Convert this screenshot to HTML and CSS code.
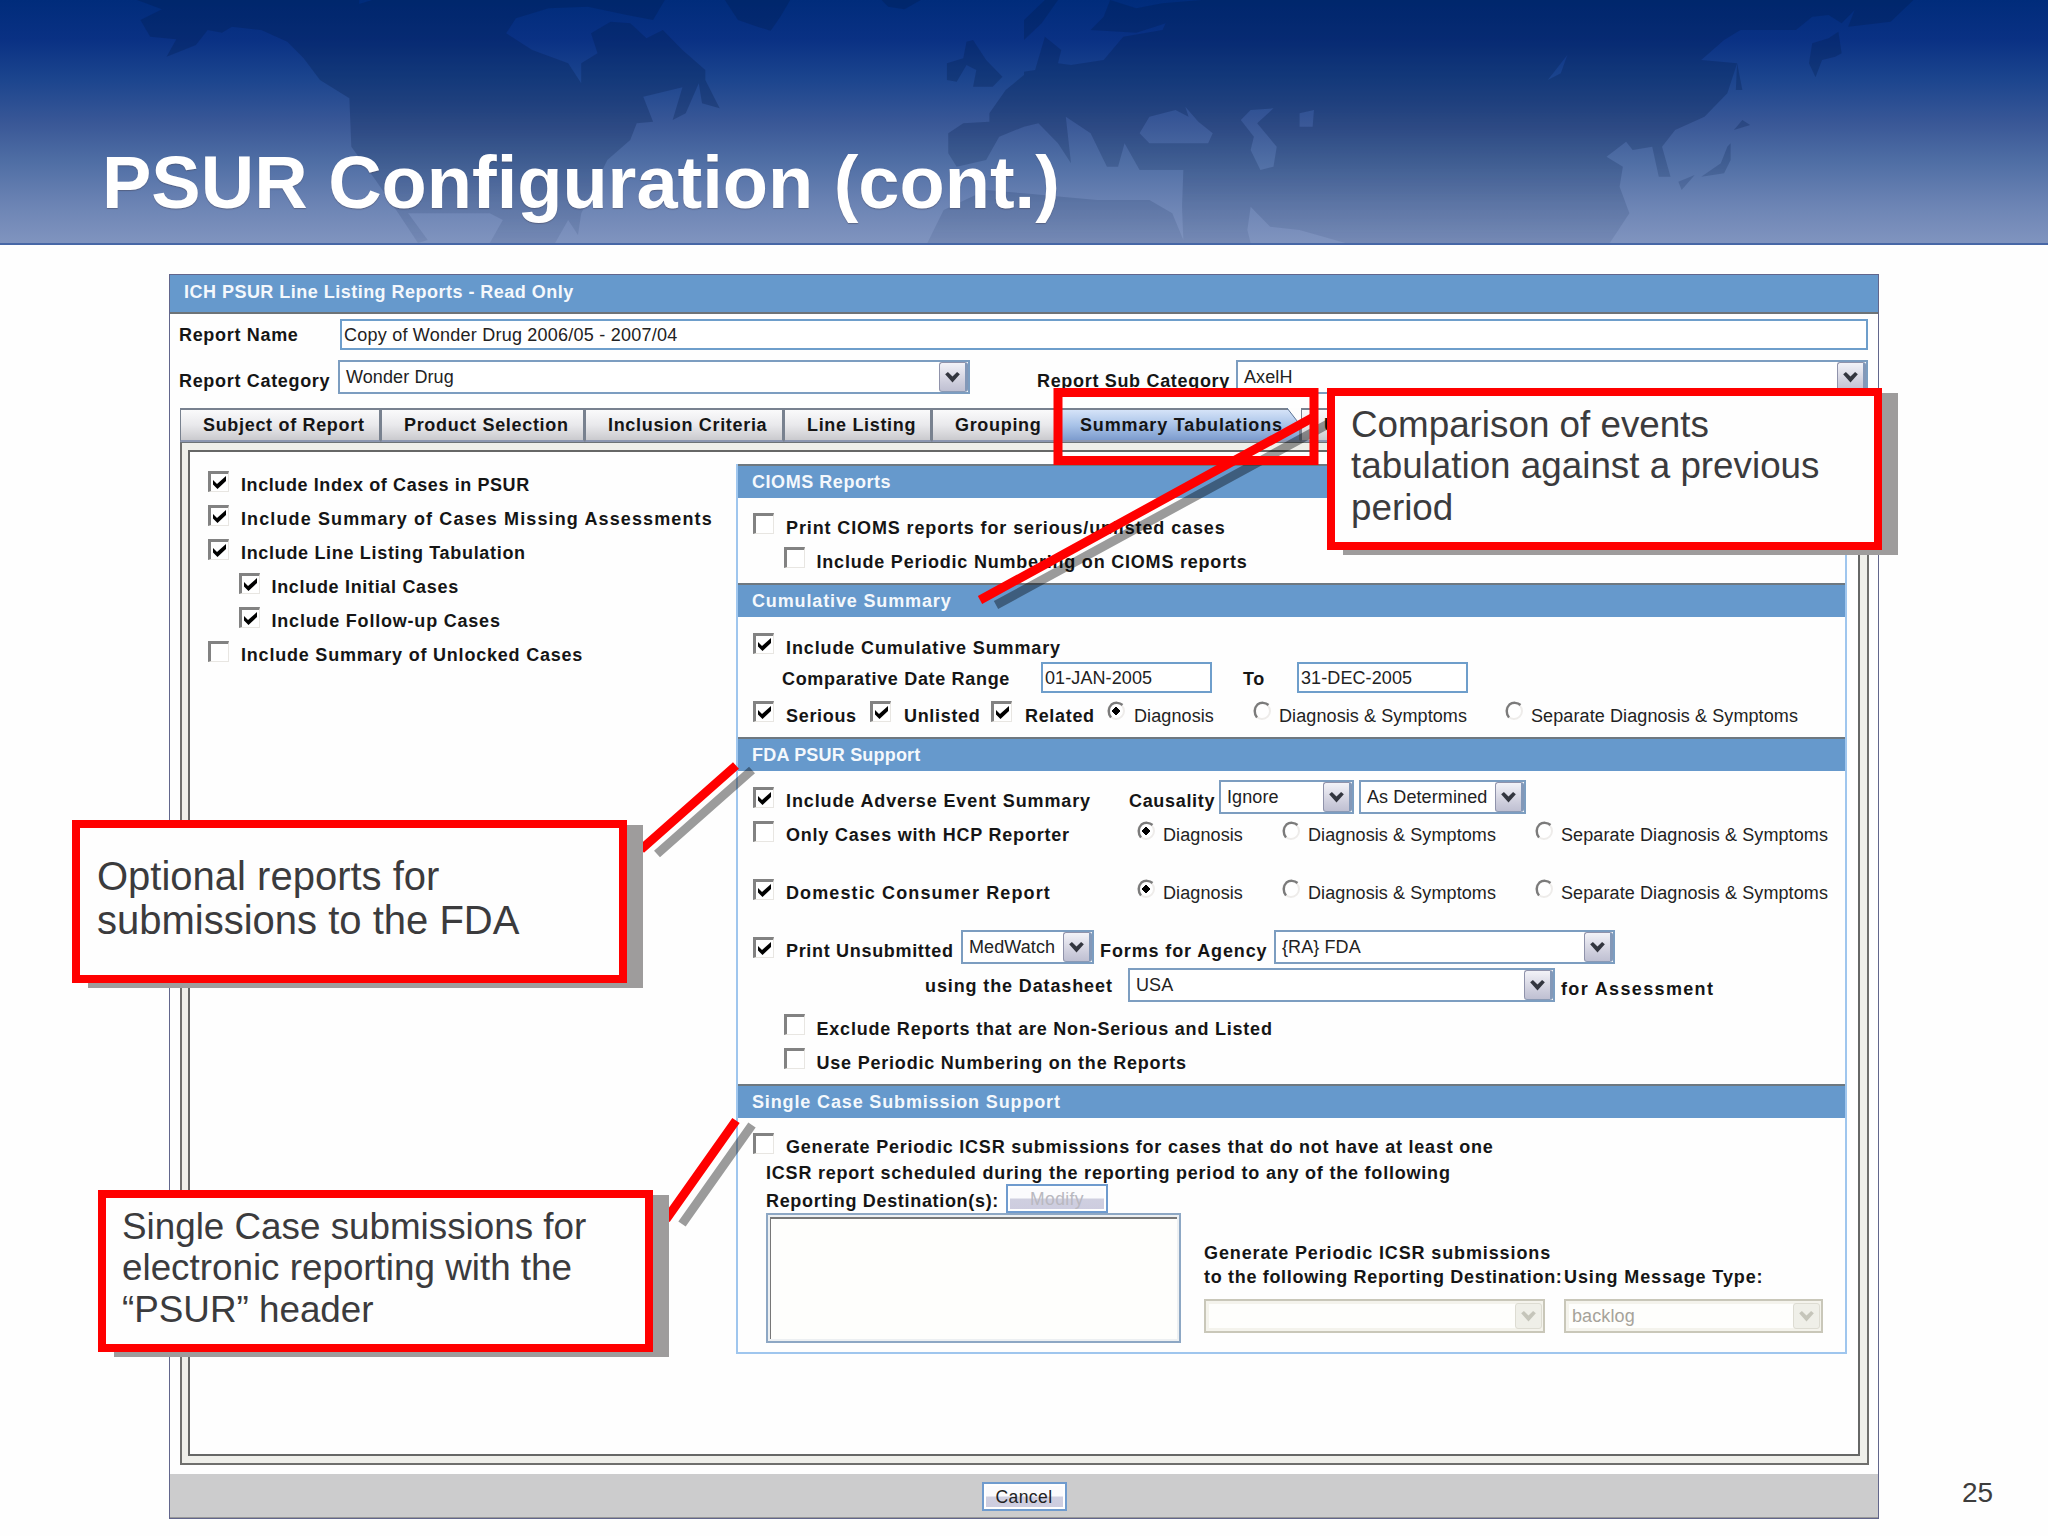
FILE: index.html
```
<!DOCTYPE html>
<html lang="en">
<head>
<meta charset="utf-8">
<title>PSUR Configuration (cont.)</title>
<link rel="stylesheet" href="styles.css">
</head>
<body>
<svg class="defs" width="0" height="0">
  <symbol id="tick" viewBox="0 0 13 13"><path d="M0 4L4 8L13 0V5L4.500 13L0 8.500Z" fill="#000"/></symbol>
  <symbol id="chev" viewBox="0 0 16 12"><path d="M0 2.500L3 0L8 5L13 0L16 2.500L8 11.500Z" fill="currentColor"/></symbol>
  <symbol id="radio" viewBox="0 0 18 20"><circle cx="9" cy="10" r="8" fill="#fff" stroke="#eeecea" stroke-width="2"/><path d="M4 16.500A8 9 0 0 1 4.500 3.500A8 7 0 0 1 15.500 4" fill="none" stroke="#7b7b7b" stroke-width="2.400"/></symbol>
  <symbol id="dot" viewBox="0 0 18 20"><use href="#radio"/><path d="M9 6L13 10L9 14L5 10Z" fill="#000" stroke="#000"/></symbol>
</svg>
<div class="slide">
  <header class="banner">
    <svg class="map" viewBox="0 0 2048 243" preserveAspectRatio="none">
      <g fill="#001b45" fill-opacity=".27" transform="scale(.65306 .33333)">
        <path d="M210 0L248 28L215 60L230 110L270 118L255 170L300 135L318 90L340 98L355 80L400 90L440 125L465 175L490 240L535 295L538 440L575 540L610 640L640 729L655 720L625 640L750 640L770 660L750 729H850L870 660L885 705L890 640L930 480L965 420L975 370L1000 365L985 290L1045 262L1030 360L1050 340L1070 250L1075 310L1102 325L1080 240L1080 210L1045 150L1015 90L990 115L965 70L935 65L905 100L915 160L890 190V250L870 190L815 150L775 100L790 55L840 25L900 20L960 45L1000 60L1018 0H570L550 12V0Z"/>
        <path d="M1110 0L1130 60L1160 80L1180 92L1195 50L1210 0Z"/>
        <path d="M1350 0L1360 20L1385 28L1410 0Z"/>
        <path d="M1490 120L1510 180L1535 230L1520 260L1490 260L1495 210L1480 195L1465 245L1450 240L1450 190L1475 175L1480 125Z"/>
        <path d="M1568 60L1600 0H1620L1595 70L1568 120Z"/>
        <path d="M1568 225L1540 270L1515 340V365L1475 370L1452 400V460L1465 500L1510 480L1530 410L1568 380L1590 370L1620 430L1640 490L1632 350L1670 400L1695 500L1712 500L1722 430L1745 510H1812L1810 620L1812 720L1795 640L1760 600L1680 600L1625 590L1568 580L1510 570L1445 630L1420 729H2060L1990 690L1945 680L1915 620L1910 690L1915 729H2465L2495 640L2480 560L2485 500L2460 470L2490 425L2500 450L2530 440L2540 530L2558 530L2545 440L2565 390L2610 350L2645 280L2660 190L2605 180L2640 120L2665 90H2750L2775 50L2800 45L2820 70L2840 30L2830 80L2895 65L2930 0H1840L1780 10L1740 25L1700 0L1690 50L1670 90L1740 98L1785 70L1780 90L1720 110L1690 180L1640 195L1620 190L1625 150L1600 110L1585 210L1568 215ZM1800 330L1820 350L1815 320L1835 365L1857 400L1850 430L1760 430L1745 400L1760 350ZM1915 330L1950 325L1925 370L1955 440L1950 500L1930 510L1915 450L1920 410L1900 360ZM1990 340L2012 330L2010 380L1990 380ZM2370 240L2400 165L2390 220Z" fill-rule="evenodd"/>
        <path d="M2815 95L2820 160L2810 170L2790 180L2780 232L2770 190L2775 130L2800 115Z"/>
        <path d="M2660 190L2668 270L2658 270ZM2668 360L2680 375L2655 390ZM2650 430L2650 480L2640 520L2605 530L2635 490L2645 440ZM2595 525L2570 545L2575 570Z"/>
      </g>
    </svg>
    <h1 class="heading">PSUR Configuration (cont.)</h1>
  </header>

  <main class="stage">
    <div class="window">
      <div class="titlebar">ICH PSUR Line Listing Reports - Read Only</div>
      <div class="form">
        <div class="name-row"><span class="b">Report Name</span><span class="input">Copy of Wonder Drug 2006/05 - 2007/04</span></div>
        <div class="cat-row">
          <span class="b">Report Category</span>
          <span class="select">Wonder Drug<i class="btn"><svg><use href="#chev"/></svg></i></span>
          <span class="b">Report Sub Category</span>
          <span class="select">AxelH<i class="btn"><svg><use href="#chev"/></svg></i></span>
        </div>
      </div>
      <nav class="tabs">
        <span class="tab">Subject of Report</span><span class="tab">Product Selection</span><span class="tab">Inclusion Criteria</span><span class="tab">Line Listing</span><span class="tab">Grouping</span><span class="tab active">Summary Tabulations<svg class="corner" width="14" height="22"><path d="M0 0H14V18Z" fill="#fdfdfd"/><path d="M0 0L14 18" stroke="#5a7396" fill="none"/></svg></span><span class="tab">U</span>
      </nav>
      <div class="frame">
        <div class="panel">
          <div class="options">
            <div class="opt"><i class="cb"><svg><use href="#tick"/></svg></i><span class="b tight">Include Index of Cases in PSUR</span></div>
            <div class="opt"><i class="cb"><svg><use href="#tick"/></svg></i><span class="b loose3">Include Summary of Cases Missing Assessments</span></div>
            <div class="opt"><i class="cb"><svg><use href="#tick"/></svg></i><span class="b">Include Line Listing Tabulation</span></div>
            <div class="opt sub"><i class="cb"><svg><use href="#tick"/></svg></i><span class="b">Include Initial Cases</span></div>
            <div class="opt sub"><i class="cb"><svg><use href="#tick"/></svg></i><span class="b loose1">Include Follow-up Cases</span></div>
            <div class="opt"><i class="cb"></i><span class="b loose1">Include Summary of Unlocked Cases</span></div>
          </div>
          <div class="sections">
            <section class="cioms">
              <h2>CIOMS Reports</h2>
              <div class="opt"><i class="cb"></i><span class="b loose2">Print CIOMS reports for serious/unlisted cases</span></div>
              <div class="opt sub"><i class="cb"></i><span class="b loose1">Include Periodic Numbering on CIOMS reports</span></div>
            </section>
            <section class="cumulative">
              <h2 class="loose2">Cumulative Summary</h2>
              <div class="opt"><i class="cb"><svg><use href="#tick"/></svg></i><span class="b loose2">Include Cumulative Summary</span></div>
              <div class="dates"><span class="b">Comparative Date Range</span><span class="input">01-JAN-2005</span><span class="b">To</span><span class="input">31-DEC-2005</span></div>
              <div class="kinds">
                <i class="cb"><svg><use href="#tick"/></svg></i><span class="b">Serious</span>
                <i class="cb"><svg><use href="#tick"/></svg></i><span class="b">Unlisted</span>
                <i class="cb"><svg><use href="#tick"/></svg></i><span class="b">Related</span>
                <svg class="rad"><use href="#dot"/></svg><span class="r">Diagnosis</span>
                <svg class="rad"><use href="#radio"/></svg><span class="r">Diagnosis &amp; Symptoms</span>
                <svg class="rad"><use href="#radio"/></svg><span class="r">Separate Diagnosis &amp; Symptoms</span>
              </div>
            </section>
            <section class="fda">
              <h2 class="tight2">FDA PSUR Support</h2>
              <div class="adverse">
                <i class="cb"><svg><use href="#tick"/></svg></i><span class="b loose2">Include Adverse Event Summary</span>
                <span class="b">Causality</span>
                <span class="select">Ignore<i class="btn"><svg><use href="#chev"/></svg></i></span>
                <span class="select">As Determined<i class="btn"><svg><use href="#chev"/></svg></i></span>
              </div>
              <div class="detail">
                <i class="cb"></i><span class="b loose1">Only Cases with HCP Reporter</span>
                <svg class="rad"><use href="#dot"/></svg><span class="r">Diagnosis</span>
                <svg class="rad"><use href="#radio"/></svg><span class="r">Diagnosis &amp; Symptoms</span>
                <svg class="rad"><use href="#radio"/></svg><span class="r">Separate Diagnosis &amp; Symptoms</span>
              </div>
              <div class="detail">
                <i class="cb"><svg><use href="#tick"/></svg></i><span class="b loose3">Domestic Consumer Report</span>
                <svg class="rad"><use href="#dot"/></svg><span class="r">Diagnosis</span>
                <svg class="rad"><use href="#radio"/></svg><span class="r">Diagnosis &amp; Symptoms</span>
                <svg class="rad"><use href="#radio"/></svg><span class="r">Separate Diagnosis &amp; Symptoms</span>
              </div>
              <div class="print">
                <i class="cb"><svg><use href="#tick"/></svg></i><span class="b">Print Unsubmitted</span>
                <span class="select">MedWatch<i class="btn"><svg><use href="#chev"/></svg></i></span>
                <span class="b loose2">Forms for Agency</span>
                <span class="select">{RA} FDA<i class="btn"><svg><use href="#chev"/></svg></i></span>
              </div>
              <div class="sheet">
                <span class="b loose2">using the Datasheet</span>
                <span class="select">USA<i class="btn"><svg><use href="#chev"/></svg></i></span>
                <span class="b low loose4">for Assessment</span>
              </div>
              <div class="opt sub"><i class="cb"></i><span class="b loose1">Exclude Reports that are Non-Serious and Listed</span></div>
              <div class="opt sub"><i class="cb"></i><span class="b loose1">Use Periodic Numbering on the Reports</span></div>
            </section>
            <section class="single">
              <h2 class="loose2">Single Case Submission Support</h2>
              <div class="opt"><i class="cb"></i><span class="b loose1">Generate Periodic ICSR submissions for cases that do not have at least one</span></div>
              <div class="cont b loose1">ICSR report scheduled during the reporting period to any of the following</div>
              <div class="dest"><span class="b">Reporting Destination(s):</span><span class="button off">Modify</span></div>
              <div class="lower">
                <div class="listbox"></div>
                <div class="route">
                  <div class="b loose2">Generate Periodic ICSR submissions</div>
                  <div class="route-heads"><span class="b">to the following Reporting Destination:</span><span class="b loose2">Using Message Type:</span></div>
                  <div class="route-fields">
                    <span class="select off"><i class="btn"><svg><use href="#chev"/></svg></i></span>
                    <span class="select off">backlog<i class="btn"><svg><use href="#chev"/></svg></i></span>
                  </div>
                </div>
              </div>
            </section>
          </div>
        </div>
      </div>
      <footer class="actions"><span class="button">Cancel</span></footer>
    </div>
    <div class="page-no">25</div>
  </main>

  <svg class="marks" width="2048" height="1536" fill="none" stroke-width="9">
    <g stroke="#000" stroke-opacity=".39">
      <path d="M996 605L1328 424M752 770L657 854M752 1125L682 1224"/>
    </g>
    <g stroke="#f00">
      <path d="M980 600L1312 418M736 765.500L641 849.500M736 1120.500L666 1219.500"/>
      <rect x="1058" y="392.500" width="256" height="68"/>
    </g>
  </svg>
  <div class="callout compare">Comparison of events tabulation against a previous period</div>
  <div class="callout optional">Optional reports for submissions to the FDA</div>
  <div class="callout electronic">Single Case submissions for electronic reporting with the “PSUR” header</div>
</div>
</body>
</html>
```
FILE: styles.css
```
* { box-sizing: border-box; }
body { margin: 0; background: #fefefe; font-family: "Liberation Sans", Arial, sans-serif; }
.defs { position: absolute; }
.slide { position: relative; width: 2048px; height: 1536px; overflow: hidden; display: flex; flex-direction: column; }

/* Banner */
.banner {
  position: relative; height: 245px; flex: none; padding: 141px 0 0 102px;
  border-bottom: 2px solid #4767a6;
  background: linear-gradient(#002c7b 0, #0a3184 40px, #1c458e 80px, #3a5897 124px, #506fa5 163px, #6c84b4 205px, #8094bf 243px);
}
.map { position: absolute; left: 0; top: 0; width: 2048px; height: 243px; -webkit-mask-image: linear-gradient(#000 45%, rgba(0,0,0,.3)); mask-image: linear-gradient(#000 45%, rgba(0,0,0,.3)); }
.heading { position: relative; margin: 0; font-size: 74px; line-height: 84px; font-weight: bold; color: #fff; white-space: nowrap; text-shadow: 0 1px 1px rgba(70,70,90,.5); }

/* Application window */
.stage { display: flex; padding: 29px 0 0 169px; }
.window { width: 1710px; height: 1245px; flex: none; border: 1px solid #62668c; display: flex; flex-direction: column; font-size: 18px; color: #222; }
.b { font-weight: bold; font-size: 18px; letter-spacing: .68px; color: #151515; line-height: 28px; white-space: nowrap; }
.tight { letter-spacing: .59px; }
.loose1 { letter-spacing: .79px; }
.loose2 { letter-spacing: .88px; }
.loose3 { letter-spacing: 1.120px; }
.loose4 { letter-spacing: 1.350px; }
.r { font-size: 18px; letter-spacing: .1px; line-height: 28px; white-space: nowrap; }
.titlebar { height: 39px; flex: none; background: #6699cc; border-bottom: 2px solid #6d7377; color: #f4f8fc; font-weight: bold; letter-spacing: .48px; padding-left: 14px; line-height: 35px; }
.form { height: 94px; flex: none; padding: 5px 10px 0 9px; }
.name-row, .cat-row { display: grid; grid-template-columns: 161px 1fr; align-items: start; }
.cat-row { grid-template-columns: 159px 632px 67px 199px 1fr; margin-top: 10px; }
.cat-row > :nth-child(3) { grid-column: 4; }
.cat-row > .b { margin-top: 7px; }
.input { height: 31px; border: 2px solid #6e9ecb; background: #fff; padding-left: 2px; line-height: 28px; letter-spacing: .23px; white-space: nowrap; }
.name-row .b { margin-top: 2px; }
.select { height: 34px; border: 2px solid #7c9dc0; background: #fff; padding-left: 6px; line-height: 30px; letter-spacing: .1px; display: flex; justify-content: space-between; white-space: nowrap; }
.btn { width: 29px; flex: none; margin: 0; border: 1px solid #9093ab; border-right: 3px solid #8398b8; border-bottom: 1px solid #8b9ab5; border-radius: 3px; background: linear-gradient(#f3f3f8, #cdcddc 70%, #bfc0d2); display: flex; align-items: center; justify-content: center; color: #33363f; }
.btn svg { width: 15px; height: 11px; }
.select.off { border-color: #c9c7b9; background: #fefefc; color: #a6a39a; box-shadow: inset 0 0 0 3px #f4f3ec; }
.select.off:first-child { justify-content: flex-end; }
.off .btn { color: #c5c5ba; background: #efefe8; border: 1px solid #dddcd2; margin: 2px 1px 2px 0; width: 27px; }

/* Tabs */
.tabs { height: 35px; flex: none; margin: 0 10px; display: grid; grid-template-columns: 201px 204px 199px 148px 129px 240px 1fr; border-bottom: 3px solid #6d7377; }
.tab { border: 2px solid #78818f; border-width: 2px 2px 2px 1px; border-bottom-color: #8c97b0; background: linear-gradient(#fafafb, #e9e9ec 50%, #cacace); font-weight: bold; font-size: 18px; letter-spacing: .68px; color: #151515; line-height: 30px; padding-left: 22px; white-space: nowrap; }
.tab.active { position: relative; background: linear-gradient(#d5e3f8, #a9c3e8 50%, #7d9cce); padding-left: 19px; border-left: 0; letter-spacing: .85px; }
.corner { position: absolute; right: -2px; top: -2px; }
.frame { flex: 1; margin: 0 9px 0 10px; border: 2px solid #6f6f6d; border-top: 0; background: #efefea; padding: 7px 7px 7px 6px; }
.panel { height: 100%; border: 2px solid #666766; background: #fefefe; display: flex; }
.options { width: 546px; padding: 20px 0 0 18px; }
.opt { height: 34px; display: grid; grid-template-columns: 33px 1fr; align-items: start; }
.opt.sub { padding-left: 30.500px; }
.options .cb { margin-top: -1px; }
.options .b { margin-top: -1px; }
.cb { display: block; width: 21px; height: 21px; border: 1px solid #e8e6e2; border-top: 3px solid #828282; border-left: 3px solid #828282; background: #fff; padding: 2px 0 0 2px; }
.cb svg { display: block; width: 13px; height: 13px; }
.rad { width: 18px; height: 20px; display: block; }

/* Report sections */
.sections { width: 1111px; height: 890px; margin-top: 12px; border: 2px solid #9fc6ee; border-top: 0; }
.sections h2 { margin: 0 0 0 -15px; height: 34px; border-top: 2px solid #6e7880; background: #6699cc; color: #f4f8fc; font-size: 18px; line-height: 32px; padding-left: 14px; }
h2 { letter-spacing: .55px; }
h2.loose2 { letter-spacing: .86px; }
h2.tight2 { letter-spacing: .2px; }
section { padding-left: 15px; }
.cioms { height: 119px; }
.cioms .opt:nth-child(2) { margin-top: 15px; }
.cioms .b, .cumulative .b, .kinds .r, .fda .b, .fda .r { position: relative; top: 1px; }
.cumulative { height: 154px; }
.cumulative .opt { margin-top: 16px; height: 28px; }
.dates { display: grid; grid-template-columns: 259px 171px 31px 54px 171px; padding-left: 29px; height: 40px; align-items: start; }
.dates .b { margin-top: 3px; }
.dates .input { margin-top: 1px; }
.dates > :nth-child(3) { grid-column: 4; }
.dates .input { letter-spacing: .1px; }
.kinds { display: grid; grid-template-columns: 33px 84px 34px 87px 34px 82px 27px 119px 26px 226px 26px 1fr; }
.fda { height: 347px; }
.adverse { display: grid; grid-template-columns: 33px 343px 90px 135px 5px 167px; margin-top: 9px; height: 41px; }
.adverse > :nth-child(5) { grid-column: 6; }
.adverse .cb, .print .cb { margin-top: 7px; }
.adverse .b, .print .b { margin-top: 6px; }
.detail { display: grid; grid-template-columns: 33px 351px 26px 119px 26px 227px 26px 1fr; height: 58px; }
.detail .b, .detail .r { margin-top: -1px; }
.print { display: grid; grid-template-columns: 33px 175px 133px 6px 174px 341px; margin-top: -7px; height: 38px; }
.print > :nth-child(4) { grid-column: 5; }
.sheet { display: grid; grid-template-columns: 203px 427px 6px 1fr; padding-left: 172px; height: 46px; }
.sheet .b { margin-top: 3px; }
.sheet .low { grid-column: 4; margin-top: 6px; }
.single .opt { margin-top: 15px; height: 26px; }
.cont { margin-left: 13px; height: 25px; }
.dest { display: grid; grid-template-columns: 240px 102px; margin-left: 13px; height: 29px; }
.dest .b { margin-top: 3px; }
.button { border: 2px solid #6f9bce; box-shadow: inset 0 0 0 2px #fff; background: linear-gradient(#fbfbfd 46%, #cfcfe0 54%, #cdccdf); height: 29px; line-height: 27px; text-align: center; font-size: 17.500px; letter-spacing: .4px; }
.button.off { color: #b9b8bf; }
.lower { display: flex; margin-left: 13px; gap: 23px; }
.listbox { width: 415px; height: 130px; border: 2px solid #8da7c4; background: #fefefc; box-shadow: inset 0 0 0 2px #edf0f2, inset 3px 4px 0 #777; }
.route { padding-top: 27px; }
.route .b { line-height: 24px; }
.route > .b { margin-top: 1px; }
.route-heads { display: grid; grid-template-columns: 360px 260px; }
.route-fields { display: grid; grid-template-columns: 341px 259px; column-gap: 19px; margin-top: 10px; }
.actions { height: 44px; flex: none; margin-top: 9px; background: #cccccd; border-bottom: 1px solid #999; display: flex; justify-content: center; padding: 8px 0 0; }
.actions .button { width: 85px; }
.page-no { align-self: flex-end; margin: 0 0 10px 83px; font-size: 28px; line-height: 32px; color: #3d3d3d; }

/* Annotations over the window */
.marks { position: absolute; left: 0; top: 0; }
.callout { position: absolute; width: 555px; height: 162px; border: 8px solid #f00; background: #fefefe; box-shadow: 16px 5px 0 #9e9c9c; color: #3b3b3d; font-size: 36.800px; line-height: 41.400px; padding: 8px 10px 0 16px; }
.compare { left: 1327px; top: 388px; }
.optional { left: 72px; top: 820px; height: 163px; font-size: 40px; line-height: 44px; padding: 26px 80px 0 17px; }
.electronic { left: 98px; top: 1190px; }
```
